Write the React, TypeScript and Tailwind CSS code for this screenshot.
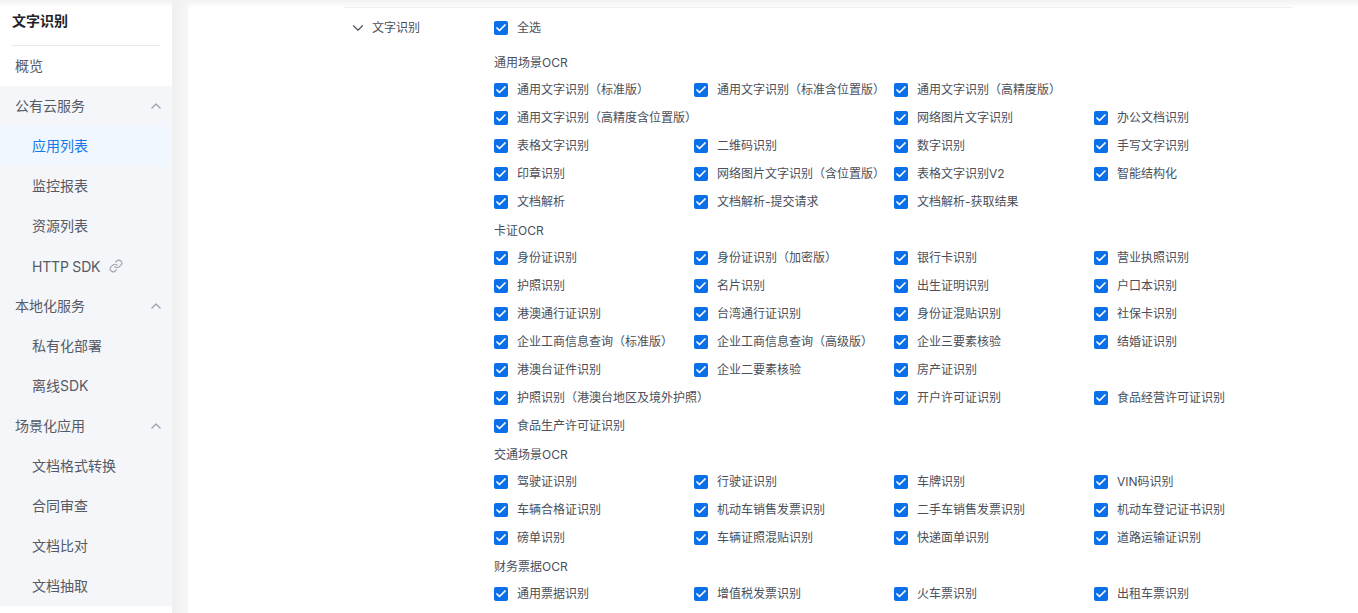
import { ChevronDown, ChevronUp, Check, Link } from "lucide-react";

type section = {
  title: string;
  items: (string | null | { name: string; wide: boolean })[];
};

const sections: section[] = [
  {
    title: "通用场景OCR",
    items: [
      "通用文字识别（标准版）",
      "通用文字识别（标准含位置版）",
      "通用文字识别（高精度版）",
      null,
      { name: "通用文字识别（高精度含位置版）", wide: true },
      "网络图片文字识别",
      "办公文档识别",
      "表格文字识别",
      "二维码识别",
      "数字识别",
      "手写文字识别",
      "印章识别",
      "网络图片文字识别（含位置版）",
      "表格文字识别V2",
      "智能结构化",
      "文档解析",
      "文档解析-提交请求",
      "文档解析-获取结果",
    ],
  },
  {
    title: "卡证OCR",
    items: [
      "身份证识别",
      "身份证识别（加密版）",
      "银行卡识别",
      "营业执照识别",
      "护照识别",
      "名片识别",
      "出生证明识别",
      "户口本识别",
      "港澳通行证识别",
      "台湾通行证识别",
      "身份证混贴识别",
      "社保卡识别",
      "企业工商信息查询（标准版）",
      "企业工商信息查询（高级版）",
      "企业三要素核验",
      "结婚证识别",
      "港澳台证件识别",
      "企业二要素核验",
      "房产证识别",
      null,
      { name: "护照识别（港澳台地区及境外护照）", wide: true },
      "开户许可证识别",
      "食品经营许可证识别",
      "食品生产许可证识别",
    ],
  },
  {
    title: "交通场景OCR",
    items: [
      "驾驶证识别",
      "行驶证识别",
      "车牌识别",
      "VIN码识别",
      "车辆合格证识别",
      "机动车销售发票识别",
      "二手车销售发票识别",
      "机动车登记证书识别",
      "磅单识别",
      "车辆证照混贴识别",
      "快递面单识别",
      "道路运输证识别",
    ],
  },
  {
    title: "财务票据OCR",
    items: ["通用票据识别", "增值税发票识别", "火车票识别", "出租车票识别"],
  },
];

const CheckItem = ({ label }: { label: string }) => {
  return (
    <div className="flex h-7 items-center">
      <span className="flex h-[14px] w-[14px] shrink-0 items-center justify-center rounded-[2px] bg-[#0b6fe8]">
        <Check size={12} strokeWidth={3.5} className="text-white" />
      </span>
      <span className="ml-[9px] whitespace-nowrap text-xs text-[#4a4f5a]">{label}</span>
    </div>
  );
};

const SideGroup = ({ name }: { name: string }) => {
  return (
    <div className="flex h-10 items-center justify-between pr-[8px] pl-[15px] text-sm text-[#555a64]">
      {name}
      <ChevronUp size={16} strokeWidth={2} className="text-[#a0a4ad]" />
    </div>
  );
};

const SideItem = ({ name, active }: { name: string; active?: boolean }) => {
  return (
    <div
      className={`flex h-10 items-center pl-[32px] text-sm ${
        active ? "bg-[#f0f7ff] text-[#1677e5]" : "text-[#555a64]"
      }`}
    >
      {name}
    </div>
  );
};

const App = () => {
  return (
    <div
      className="relative flex h-[613px] w-[1358px] overflow-hidden bg-white"
      style={{ fontFamily: 'Inter, "Noto Sans CJK SC", sans-serif' }}
    >
      {/* header shadow coming down over the page */}
      <div className="pointer-events-none absolute top-0 left-0 z-20 h-2 w-full bg-gradient-to-b from-[#f2f2f2] to-transparent" />
      <aside className="h-full w-[172px] shrink-0 bg-white">
        <div className="mx-3 flex h-[46px] items-center border-b border-[#e8e9ec] pb-[4px] text-sm font-semibold text-[#1f2329]">
          文字识别
        </div>
        <div className="flex h-10 items-center pl-[15px] text-sm text-[#555a64]">概览</div>
        <div className="bg-[#f5f6fa]">
          <SideGroup name="公有云服务" />
          <SideItem name="应用列表" active />
          <SideItem name="监控报表" />
          <SideItem name="资源列表" />
          <div className="flex h-10 items-center gap-[9px] pl-[32px] text-sm tracking-[-0.2px] text-[#555a64]">
            <span className="pt-[1px]">HTTP SDK</span>
            <Link size={14} className="text-[#a0a4ad]" />
          </div>
          <SideGroup name="本地化服务" />
          <SideItem name="私有化部署" />
          <SideItem name="离线SDK" />
          <SideGroup name="场景化应用" />
          <SideItem name="文档格式转换" />
          <SideItem name="合同审查" />
          <SideItem name="文档比对" />
          <SideItem name="文档抽取" />
        </div>
      </aside>
      <div className="w-4 shrink-0 bg-gradient-to-r from-[#efefef] to-[#f7f7f8]" />
      <main className="min-w-0 flex-1 pt-[7px] pl-[156px]">
        <div className="flex w-[949px] border-t border-[#f0f1f3] pt-[6px]">
          <div className="flex h-7 w-[150px] items-center pl-[5px] text-xs text-[#4a4f5a]">
            <ChevronDown size={18} strokeWidth={1.5} className="mr-[5px] text-[#4a4f5a]" />
            文字识别
          </div>
          <div className="min-w-0 flex-1">
            <CheckItem label="全选" />
            <div className="mt-[6px]">
              {sections.map((s) => {
                return (
                  <div key={s.title}>
                    <div className="flex h-[28px] items-center pt-[2px] text-xs text-[#4a4f5a]">{s.title}</div>
                    <div className="grid grid-cols-[200px_200px_200px_200px]">
                      {s.items.map((x, i) => {
                        if (x === null) return <div key={i} />;
                        if (typeof x === "string") return <CheckItem key={i} label={x} />;
                        return (
                          <div key={i} className="col-span-2">
                            <CheckItem label={x.name} />
                          </div>
                        );
                      })}
                    </div>
                  </div>
                );
              })}
            </div>
          </div>
        </div>
      </main>
    </div>
  );
};

export default App;
